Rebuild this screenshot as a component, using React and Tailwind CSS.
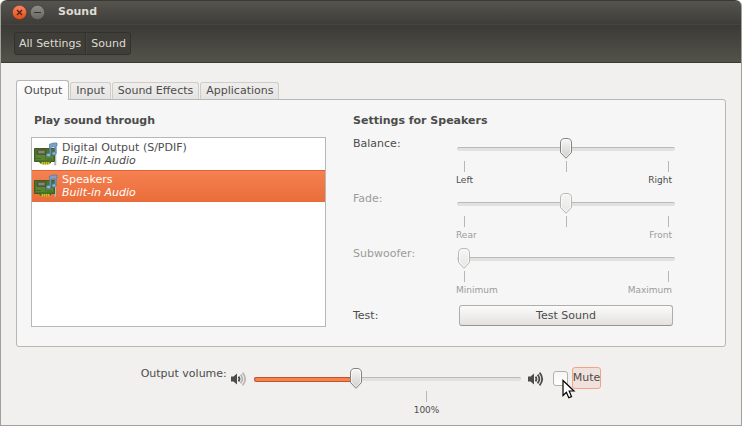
import { useState } from "react";

const devices = [
  { name: "Digital Output (S/PDIF)", detail: "Built-in Audio" },
  { name: "Speakers", detail: "Built-in Audio" },
];

const tabs = ["Output", "Input", "Sound Effects", "Applications"];

function SoundCardIcon() {
  return (
    <svg width="24" height="24" viewBox="0 0 24 24" className="shrink-0" aria-hidden="true">
      <path d="M20 7.5h2V23h-1.500V10H20z" fill="#c3c3c3" stroke="#8e8e8e" strokeWidth=".4" />
      <path d="M.5 6.500h20v13h-4v1.500H6v-1.500H.5z" fill="#4a7328" stroke="#3c5f24" />
      <path d="M2 13h9v5H2zM12 14h7v4h-7z" fill="#5b8532" />
      <path d="M2 16.500h5M9 12.500h3M13 17h5" stroke="#416a25" />
      <rect x="3.500" y="8" width="8" height="4" fill="#7a7568" stroke="#4a5138" />
      <path d="M5 10h5" stroke="#9a9484" />
      <path d="M7.500 20h8v2.500h-8z" fill="#d2be1f" />
      <path d="M9.500 20v2.500M11.500 20v2.500M13.500 20v2.500" stroke="#7d7a16" strokeWidth=".6" />
      <path d="M15.500 2.300Q19 .5 23 1v3l-.8.300v6.900h-1.400V4.600l-3.900.7v7.700h-1.400z" fill="#7ba3cb" stroke="#4f769f" strokeWidth=".7" />
      <ellipse cx="14.600" cy="13" rx="2.200" ry="1.800" fill="#8db4d9" stroke="#4f769f" strokeWidth=".7" />
      <ellipse cx="20" cy="11.500" rx="2" ry="1.700" fill="#8db4d9" stroke="#4f769f" strokeWidth=".7" />
    </svg>
  );
}

function SpeakerIcon({ loud }) {
  const wave = loud ? "#4c4c4c" : "#b9b8b6";
  return (
    <svg width="16" height="16" viewBox="0 0 16 16" className="shrink-0" fill="none" aria-hidden="true">
      <path d="M0 5.500h2.500L6 2.500v11l-3.500-3H0z" fill="#4c4c4c" />
      <path d="M7.500 5.600q2 2.400 0 4.800" stroke="#4c4c4c" strokeWidth="1.800" />
      <path d="M9.600 3.700q3.600 4.300 0 8.600" stroke={wave} strokeWidth="1.800" />
      <path d="M11.600 1.600q5.200 6.400 0 12.800" stroke={wave} strokeWidth="1.800" />
    </svg>
  );
}

function Thumb({ disabled }) {
  return (
    <svg width="12" height="21" viewBox="0 0 12 21" className="block">
      <defs>
        <linearGradient id="thumb" x1="0" y1="0" x2="0" y2="1">
          <stop offset="0" stopColor="#f7f7f6" />
          <stop offset="1" stopColor="#cfcecd" />
        </linearGradient>
        <linearGradient id="thumbDisabled" x1="0" y1="0" x2="0" y2="1">
          <stop offset="0" stopColor="#f5f5f5" />
          <stop offset="1" stopColor="#e6e6e5" />
        </linearGradient>
      </defs>
      <path
        d="M.5 5Q.5.500 5 .5h2Q11.500.500 11.500 5v9.500L6 20.300.5 14.500z"
        fill={disabled ? "url(#thumbDisabled)" : "url(#thumb)"}
        stroke={disabled ? "#bab8b6" : "#85837f"}
      />
      <path
        d="M1.500 5Q1.500 1.500 5 1.500h2Q10.500 1.500 10.500 5v9L6 18.800 1.500 14z"
        fill="none"
        stroke="#fff"
        strokeOpacity=".6"
      />
    </svg>
  );
}

function Slider({ id, initial, max = 100, disabled, filled }) {
  const [value, setValue] = useState(initial);
  const left = `calc(1px + (100% - 14px) * ${value / max})`;
  return (
    <div className="relative flex h-[21px] items-center">
      <div className="h-1 w-full rounded-sm border-t border-[#bcbab7] bg-[#e3e1df]" />
      {filled && (
        <div
          className="absolute left-0 top-[9px] h-[5px] rounded-l-sm border border-r-0 border-[#c4532b] bg-[#f6834f]"
          style={{ width: left }}
        />
      )}
      <div className="absolute top-0" style={{ left }}>
        <Thumb disabled={disabled} />
      </div>
      <input
        id={id}
        type="range"
        min="0"
        max={max}
        step="0.5"
        value={value}
        disabled={disabled}
        onChange={(e) => setValue(Number(e.target.value))}
        className="absolute inset-0 m-0 w-full opacity-0"
      />
    </div>
  );
}

function SettingRow({ id, label, initial, start, end, middle, disabled }) {
  return (
    <div className={`grid h-[55px] grid-cols-[104px_1fr] ${disabled ? "text-[#9d9b99]" : ""}`}>
      <label htmlFor={id} className="-mt-px">{label}:</label>
      <div>
        <Slider id={id} initial={initial} disabled={disabled} />
        <div className="ml-[7px] mr-1.5 mt-0.5 flex h-[11px] justify-between">
          <span className="w-px bg-[#b9b7b4]" />
          {middle && <span className="w-px bg-[#b9b7b4]" />}
          <span className="w-px bg-[#b9b7b4]" />
        </div>
        <div className="-ml-px mr-[3px] mt-0.5 flex justify-between text-[9px] leading-3">
          <span>{start}</span>
          <span>{end}</span>
        </div>
      </div>
    </div>
  );
}

function TitleBar() {
  return (
    <header className="border-b border-[#3a3934] text-[#dfdbd2]">
      <div className="flex h-6 items-center gap-[3px] rounded-t-md border-t border-[#3a3935] bg-linear-to-b from-[#55544f] to-[#3e3d39] pl-[11px]">
        <button aria-label="Close" className="size-[15px] rounded-full">
          <svg width="15" height="15" viewBox="0 0 15 15" className="block">
            <defs>
              <linearGradient id="close" x1="0" y1="0" x2="0" y2="1">
                <stop offset="0" stopColor="#f88764" />
                <stop offset="1" stopColor="#df4a16" />
              </linearGradient>
            </defs>
            <circle cx="7.500" cy="7.500" r="7.200" fill="url(#close)" stroke="#3a2f2a" strokeWidth=".5" />
            <path d="m5 5 5 5m0-5-5 5" stroke="#4a1f10" strokeWidth="1.200" />
          </svg>
        </button>
        <button aria-label="Minimize" className="size-[15px] rounded-full">
          <svg width="15" height="15" viewBox="0 0 15 15" className="block">
            <defs>
              <linearGradient id="minimize" x1="0" y1="0" x2="0" y2="1">
                <stop offset="0" stopColor="#908f89" />
                <stop offset="1" stopColor="#66655f" />
              </linearGradient>
            </defs>
            <circle cx="7.500" cy="7.500" r="7.200" fill="url(#minimize)" stroke="#33322e" strokeWidth=".5" />
            <path d="M4 7.500h7" stroke="#33322e" />
          </svg>
        </button>
        <h1 className="ml-2.5 pb-0.5 font-bold">Sound</h1>
      </div>
      <div className="h-[38px] border-t border-[#454440] bg-linear-to-b from-[#3b3a36] to-[#53524a] px-[13px] py-[7px]">
        <nav className="inline-flex h-[23px] rounded-[3px] border border-[#32312d] bg-[#3f3e39]">
          <button className="border-r border-[#32312d] px-1 pb-px">All Settings</button>
          <button className="border-l border-[#484742] px-1 pb-px">Sound</button>
        </nav>
      </div>
    </header>
  );
}

export default function App() {
  const [tab, setTab] = useState("Output");
  const [device, setDevice] = useState("Speakers");
  return (
    <div className="relative flex min-h-screen flex-col rounded-t-md border-x border-b border-[#a3a09c] bg-[#f1f0ee] font-['DejaVu_Sans',sans-serif] text-[11px] leading-[13px] text-[#4c4c4c]">
      <TitleBar />
      <main className="px-[15px] pt-[17px]">
        <div role="tablist" className="flex items-end gap-px">
          {tabs.map((name) => (
            <button
              key={name}
              role="tab"
              aria-selected={name === tab}
              onClick={() => setTab(name)}
              className={
                name === tab
                  ? "relative -mb-px h-5 rounded-t-[3px] border border-b-0 border-[#b9b7b3] bg-linear-to-b from-white to-[#f6f6f6] pb-px pl-[7px] pr-1.5"
                  : "h-[17px] rounded-t-[3px] border border-b-0 border-[#cfcdca] bg-linear-to-b from-[#efeeec] to-[#e6e4e2] px-[5px] pb-px"
              }
            >
              {name}
            </button>
          ))}
        </div>
        <section
          role="tabpanel"
          className="grid grid-cols-[295fr_322fr] gap-x-[27px] rounded-b-[3px] rounded-tr-[3px] border border-[#b9b7b3] bg-[#f6f6f6] pb-5 pl-3.5 pr-[50px] pt-3.5"
        >
          <div className="-mb-px flex flex-col">
            <h2 className="mb-2.5 pl-[3px] font-bold">Play sound through</h2>
            <ul role="listbox" aria-label="Play sound through" className="grow border border-[#b9b7b3] bg-white">
              {devices.map(({ name, detail }) => (
                <li key={name} role="option" aria-selected={name === device}>
                  <button
                    onClick={() => setDevice(name)}
                    className={`flex h-8 w-full items-center gap-1 px-0.5 text-left ${
                      name === device
                        ? "bg-linear-to-b from-[#f68151] to-[#e96d3a] text-white shadow-[inset_0_1px_#e4622f]"
                        : ""
                    }`}
                  >
                    <SoundCardIcon />
                    <span>
                      <span className="block">{name}</span>
                      <span className="block italic">{detail}</span>
                    </span>
                  </button>
                </li>
              ))}
            </ul>
          </div>
          <div>
            <h2 className="mb-[11px] font-bold">Settings for Speakers</h2>
            <SettingRow id="balance" label="Balance" initial={50} start="Left" end="Right" middle />
            <SettingRow id="fade" label="Fade" initial={50} start="Rear" end="Front" middle disabled />
            <SettingRow id="subwoofer" label="Subwoofer" initial={0} start="Minimum" end="Maximum" disabled />
            <div className="mt-0.5 flex items-center">
              <span className="w-[106px]">Test:</span>
              <button className="mr-0.5 h-[21px] grow rounded-[3px] border border-[#b1aeaa] border-b-[#97948f] bg-linear-to-b from-[#fbfbfb] to-[#e4e2e0]">
                Test Sound
              </button>
            </div>
          </div>
        </section>
        <div className="mt-5 flex justify-center">
          <label htmlFor="volume" className="mr-1">Output volume:</label>
          <div className="mt-1">
            <SpeakerIcon />
          </div>
          <div className="mx-[7px] mt-px w-[267px]">
            <Slider id="volume" initial={57.5} max={153} filled />
            <div className="mx-[7px] mt-0.5">
              <div className="flex w-[131%] flex-col items-center">
                <span className="h-[11px] w-px bg-[#b9b7b4]" />
                <span className="mt-0.5 text-[9px] leading-3">100%</span>
              </div>
            </div>
          </div>
          <div className="mt-1">
            <SpeakerIcon loud />
          </div>
          <div className="relative ml-[9px] flex h-[22px] items-center gap-1">
            <input
              id="mute"
              type="checkbox"
              className="size-[15px] appearance-none rounded-[3px] border border-[#b3b0ac] bg-linear-to-b from-[#f5f5f5] to-white checked:bg-[#f07746]"
            />
            <label htmlFor="mute" className="flex h-full items-center rounded-[3px] border border-[#f2a583] bg-[#f1e1dc] pb-px">
              Mute
            </label>
            <svg width="14" height="20" viewBox="0 0 14 20" className="pointer-events-none absolute left-[9px] top-3" aria-hidden="true">
              <path d="M1 1.500v15l3.400-3.200 2.400 5.500 2.700-1.200L7.200 12H12z" fill="#fff" stroke="#000" strokeWidth="1.200" />
            </svg>
          </div>
        </div>
      </main>
    </div>
  );
}
